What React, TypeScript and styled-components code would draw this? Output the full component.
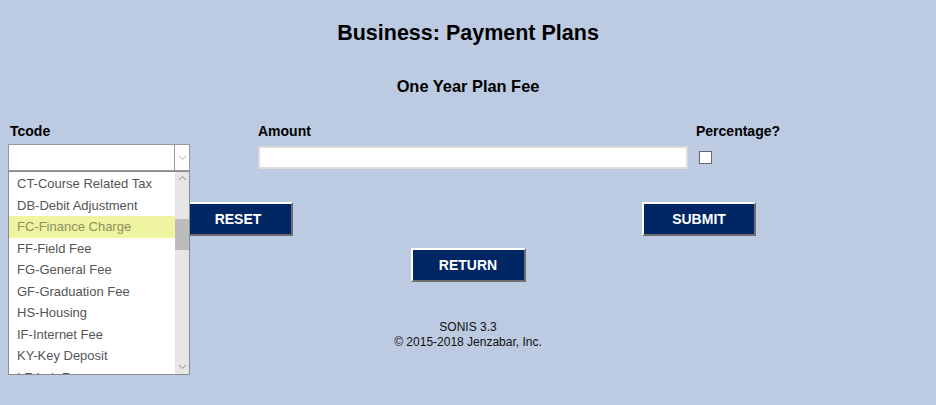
import React from 'react';
import styled, { createGlobalStyle } from 'styled-components';

const GlobalStyle = createGlobalStyle`
  html, body {
    margin: 0;
    padding: 0;
    background: #bccae2;
  }
  body {
    font-family: 'Liberation Sans', Arial, sans-serif;
    color: #000;
  }
`;

const Page = styled.div`
  position: relative;
  width: 936px;
  height: 405px;
  background: #bccae2;
  overflow: hidden;
`;

const Title = styled.h1`
  margin: 21px 0 0;
  font-size: 21.5px;
  line-height: 24px;
  font-weight: bold;
  text-align: center;
`;

const SubTitle = styled.h2`
  margin: 31px 0 0;
  font-size: 16.4px;
  line-height: 20px;
  font-weight: bold;
  text-align: center;
`;

const FormGrid = styled.div`
  display: grid;
  grid-template-columns: 250px 438px auto;
  grid-template-rows: 17px 27px;
  row-gap: 4px;
  margin: 27px 0 0 8px;
  align-items: center;
`;

const Label = styled.label<{ $indent?: number }>`
  font-size: 14px;
  line-height: 17px;
  font-weight: bold;
  padding-left: ${(p) => p.$indent ?? 0}px;
`;

const SelectBox = styled.div`
  position: relative;
  width: 182px;
  height: 27px;
  box-sizing: border-box;
  background: #fff;
  border: 1px solid #999;
  display: flex;
  justify-content: flex-end;
`;

const SelectArrow = styled.div`
  width: 14px;
  height: 100%;
  border-left: 1px solid #999;
  display: flex;
  align-items: center;
  justify-content: center;
`;

const TextInput = styled.input`
  width: 430px;
  height: 23px;
  box-sizing: border-box;
  border: 2px solid #dcdcdc;
  background: #fff;
  margin: 0;
  padding: 0 3px;
`;

const Check = styled.input`
  appearance: none;
  width: 13px;
  height: 13px;
  margin: 0 0 0 3px;
  box-sizing: border-box;
  border: 1px solid #666;
  background: #fff;
  border-radius: 0;
`;

const ButtonRow = styled.div<{ $center?: boolean }>`
  display: flex;
  justify-content: ${(p) => (p.$center ? 'center' : 'space-between')};
  padding: 0 ${(p) => (p.$center ? 0 : 180)}px 0 ${(p) => (p.$center ? 0 : 183)}px;
  margin-top: ${(p) => (p.$center ? 12 : 31)}px;
`;

const NavButton = styled.button<{ $w: number }>`
  width: ${(p) => p.$w}px;
  height: 34px;
  box-sizing: border-box;
  background: #002663;
  color: #fff;
  font-family: 'Liberation Sans', Arial, sans-serif;
  font-size: 14px;
  font-weight: bold;
  border-style: solid;
  border-width: 2px;
  border-color: #fff #6e6e6e #6e6e6e #fff;
  padding: 0;
  cursor: pointer;
`;

const Footer = styled.div`
  margin-top: 38px;
  text-align: center;
  font-size: 12px;
  line-height: 15px;
  color: #111;
`;

const DropList = styled.div`
  position: absolute;
  left: 8px;
  top: 171px;
  width: 182px;
  height: 204px;
  box-sizing: border-box;
  border: 1px solid #8c8c8c;
  background: #fff;
  display: flex;
  overflow: hidden;
`;

const Options = styled.ul`
  flex: 1;
  list-style: none;
  margin: 0;
  padding: 1px 0 0;
  overflow: hidden;
`;

const Option = styled.li<{ $active?: boolean }>`
  height: 21.5px;
  line-height: 21.5px;
  padding-left: 8px;
  font-size: 13px;
  white-space: nowrap;
  color: ${(p) => (p.$active ? '#8e8f63' : '#555')};
  background: ${(p) => (p.$active ? '#eef49f' : 'transparent')};
`;

const ScrollTrack = styled.div`
  position: relative;
  width: 14px;
  background: #e6e6e6;
  display: flex;
  flex-direction: column;
  justify-content: space-between;
  align-items: center;
  padding: 3px 0 4px;
`;

const ScrollThumb = styled.div`
  position: absolute;
  left: 0;
  top: 47px;
  width: 14px;
  height: 31px;
  background: #bcbcbc;
`;

const Chevron = ({ up, color = '#8a8a8a' }: { up?: boolean; color?: string }) => (
  <svg width="9" height="6" viewBox="0 0 9 6">
    <path
      d={up ? 'M1 5 L4.5 1.5 L8 5' : 'M1 1 L4.5 4.5 L8 1'}
      fill="none"
      stroke={color}
      strokeWidth="1"
    />
  </svg>
);

const tcodes = [
  'CT-Course Related Tax',
  'DB-Debit Adjustment',
  'FC-Finance Charge',
  'FF-Field Fee',
  'FG-General Fee',
  'GF-Graduation Fee',
  'HS-Housing',
  'IF-Internet Fee',
  'KY-Key Deposit',
  'LF-Lab Fee',
];

export default function App() {
  return (
    <Page>
      <GlobalStyle />
      <Title>Business: Payment Plans</Title>
      <SubTitle>One Year Plan Fee</SubTitle>
      <FormGrid>
        <Label $indent={2}>Tcode</Label>
        <Label>Amount</Label>
        <Label>Percentage?</Label>
        <SelectBox>
          <SelectArrow>
            <Chevron color="#b0b0b0" />
          </SelectArrow>
        </SelectBox>
        <TextInput type="text" />
        <Check type="checkbox" />
      </FormGrid>
      <ButtonRow>
        <NavButton $w={110}>RESET</NavButton>
        <NavButton $w={114}>SUBMIT</NavButton>
      </ButtonRow>
      <ButtonRow $center>
        <NavButton $w={115}>RETURN</NavButton>
      </ButtonRow>
      <Footer>
        SONIS 3.3
        <br />© 2015-2018 Jenzabar, Inc.
      </Footer>
      <DropList>
        <Options>
          {tcodes.map((t) => (
            <Option key={t} $active={t.startsWith('FC')}>
              {t}
            </Option>
          ))}
        </Options>
        <ScrollTrack>
          <Chevron up />
          <ScrollThumb />
          <Chevron />
        </ScrollTrack>
      </DropList>
    </Page>
  );
}
